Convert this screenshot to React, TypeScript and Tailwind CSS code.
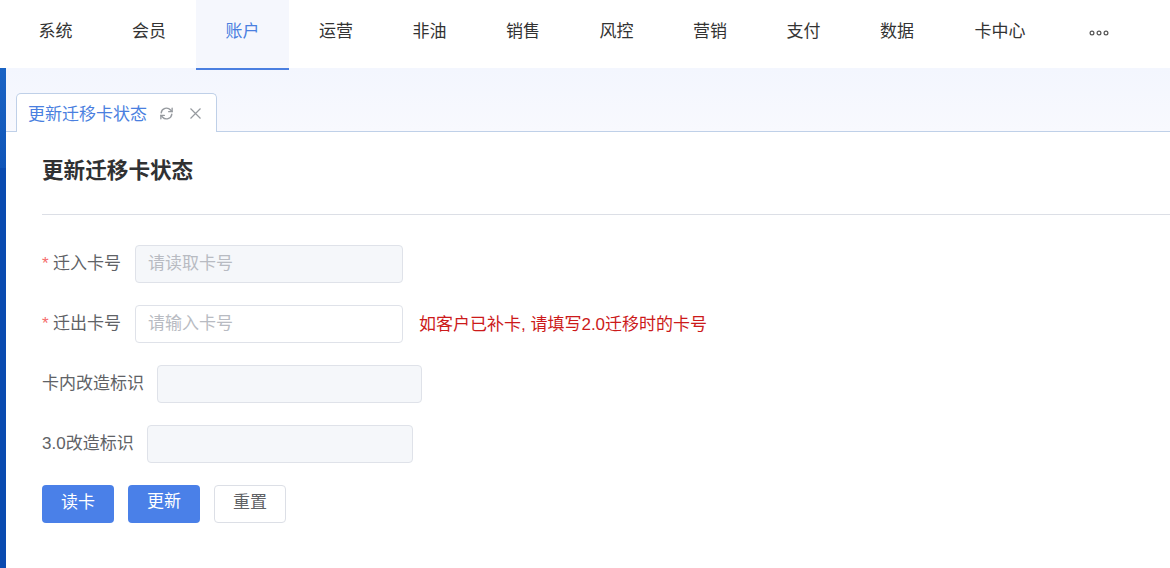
import React from "react";

const font = { fontFamily: '"Liberation Sans", "Noto Sans CJK SC", sans-serif' };
const nav = ["系统", "会员", "账户", "运营", "非油", "销售", "风控", "营销", "支付", "数据"];

function Row({ label, star, labelW, inputW, placeholder, disabled, note }: { label: string; star?: boolean; labelW: string; inputW: string; placeholder?: string; disabled?: boolean; note?: string }) {
  return (
    <div className="flex items-center h-[38px] mb-[22px]">
      <label className={`${labelW} shrink-0 text-[17px] leading-[38px] text-[#606266] whitespace-nowrap flex items-center`}>
        {star && <span className="text-[#f56c6c] text-[17px] w-[11px]">*</span>}
        {label}
      </label>
      <div className={`${inputW} h-[38px] shrink-0 rounded-[4px] border border-[#dfe2e9] pl-[12px] flex items-center text-[17px] text-[#b8bbc2] ${disabled ? "bg-[#f5f7fa]" : "bg-white"}`}>
        {placeholder}
      </div>
      {note && <span className="ml-[16px] pt-[2px] text-[17px] text-[#cc1a1a] whitespace-nowrap">{note}</span>}
    </div>
  );
}

export default function App() {
  return (
    <div style={font} className="w-[1170px] h-[568px] overflow-hidden bg-white flex flex-col">
      <header className="h-[68px] shrink-0 bg-white flex pl-[8.8px]">
        {nav.map((n) => (
          <div
            key={n}
            className={`h-[70px] relative z-10 w-[93.5px] shrink-0 flex items-center justify-center text-[17px] ${n === "账户" ? "pb-[4px] bg-[#f5f7fd] text-[#4a7fe0] border-b-2 border-[#4a7fe0]" : "pb-[6px] text-[#333333]"}`}
          >
            {n}
          </div>
        ))}
        <div className="h-[70px] w-[112.4px] shrink-0 flex items-center justify-center pb-[6px] text-[17px] text-[#333333]">卡中心</div>
        <div className="h-[68px] w-[85.6px] shrink-0 flex items-center justify-center pb-[3px]">
          <svg width="20" height="6" viewBox="0 0 20 6" fill="none" stroke="#555" strokeWidth="1.2">
            <circle cx="3" cy="3" r="1.9" />
            <circle cx="10" cy="3" r="1.9" />
            <circle cx="17" cy="3" r="1.9" />
          </svg>
        </div>
      </header>
      <div className="flex-1 flex min-h-0">
        <aside className="w-[6px] shrink-0 bg-[linear-gradient(to_bottom,#1a63c4_0px,#1055b8_100px,#0a4bb0_100px,#0a4bb0_100%)]" />
        <main className="flex-1 min-w-0 flex flex-col">
          <div className="h-[64px] shrink-0 bg-gradient-to-b from-[#f3f6fe] to-[#f8f9fe] border-b border-[#bfd0e8] pl-[10px] flex items-end">
            <div className="w-[201px] h-[39px] -mb-px bg-white border border-b-0 border-[#bfd0e8] rounded-t-[5px] flex items-center pl-[11px]">
              <span className="pt-[3px] text-[17px] text-[#4a7fe0] whitespace-nowrap">更新迁移卡状态</span>
              <svg className="ml-[12px]" width="15" height="15" viewBox="0 0 24 24" fill="none" stroke="#969a9f" strokeWidth="2.2" strokeLinecap="round">
                <path d="M3.5 11a8.5 8.5 0 0 1 15-4.5L21 9" />
                <path d="M21 3.5V9h-5.5" />
                <path d="M20.5 13a8.5 8.5 0 0 1-15 4.5L3 15" />
                <path d="M3 20.5V15h5.5" />
              </svg>
              <svg className="ml-[15px]" width="13" height="13" viewBox="0 0 13 13" fill="none" stroke="#969a9f" strokeWidth="1.2">
                <path d="M1.5 1.5l10 10M11.5 1.5l-10 10" />
              </svg>
            </div>
          </div>
          <div className="flex-1 pl-[36px]">
            <h1 className="h-[83px] pt-[20px] text-[21.6px] leading-[38px] font-bold text-[#303133] border-b border-[#dcdfe6]">更新迁移卡状态</h1>
            <div className="pt-[30px]">
              <Row star label="迁入卡号" labelW="w-[93px]" inputW="w-[268px]" placeholder="请读取卡号" disabled />
              <Row star label="迁出卡号" labelW="w-[93px]" inputW="w-[268px]" placeholder="请输入卡号" note="如客户已补卡, 请填写2.0迁移时的卡号" />
              <Row label="卡内改造标识" labelW="w-[115px]" inputW="w-[265px]" disabled />
              <Row label="3.0改造标识" labelW="w-[105px]" inputW="w-[266px]" disabled />
              <div className="flex gap-[14px]">
                <button className="w-[72px] h-[38px] pb-[3px] rounded-[4px] bg-[#4a80e8] text-white text-[17px]">读卡</button>
                <button className="w-[72px] h-[38px] pb-[4px] rounded-[4px] bg-[#4a80e8] text-white text-[17px]">更新</button>
                <button className="w-[72px] h-[38px] pb-[3px] rounded-[4px] bg-white border border-[#dcdfe6] text-[#606266] text-[17px]">重置</button>
              </div>
            </div>
          </div>
        </main>
      </div>
    </div>
  );
}
